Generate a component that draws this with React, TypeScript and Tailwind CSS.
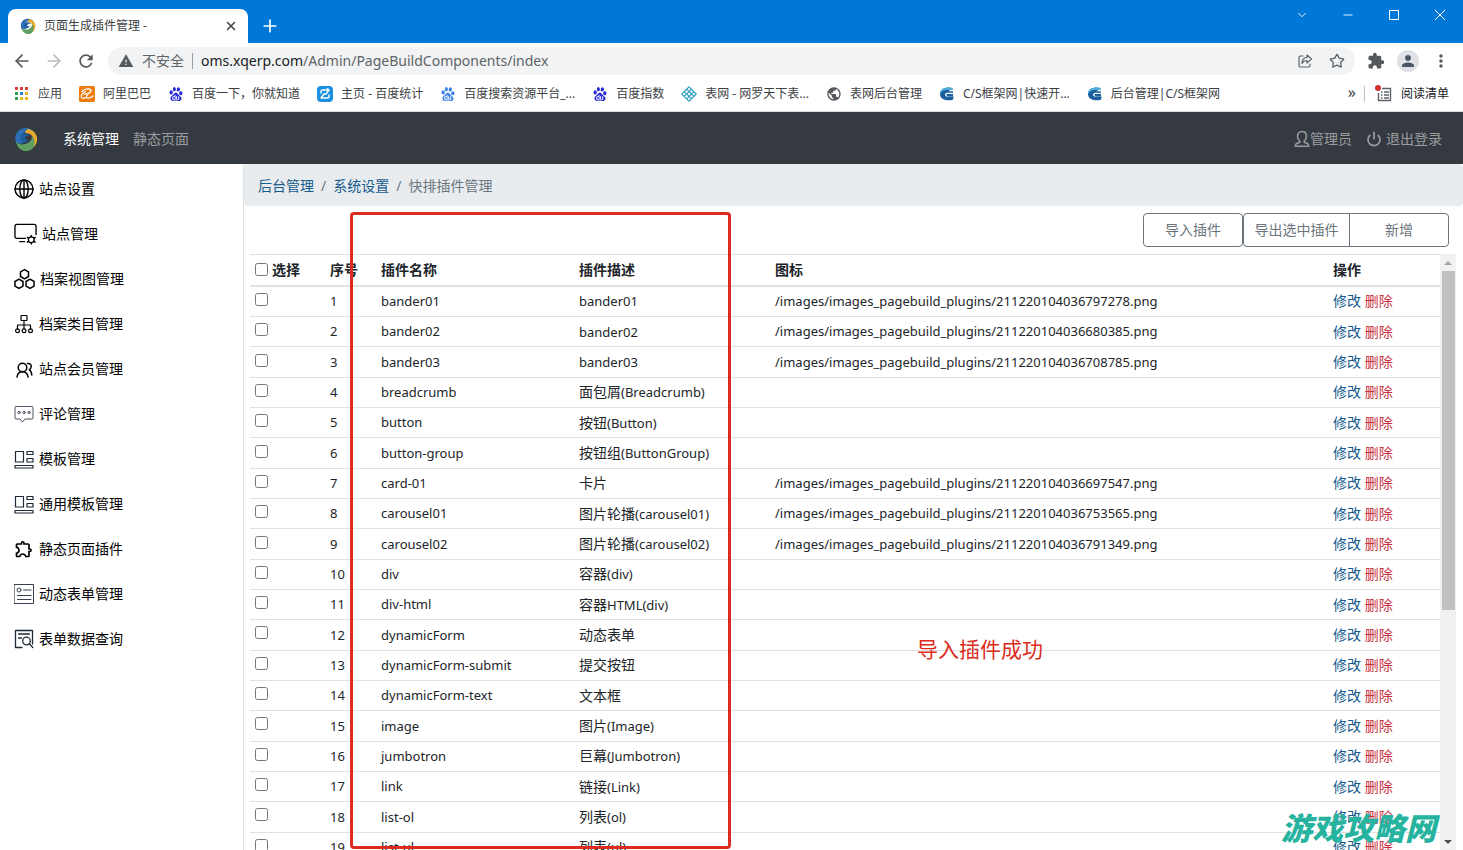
import React from 'react';
import { ChevronDown, Minus, Square, X, Plus, ArrowLeft, ArrowRight, Star, Power } from 'lucide-react';
import { MdExtension, MdOutlineExtension, MdPerson, MdMoreVert, MdRefresh, MdWarning, MdPublic } from 'react-icons/md';
import { SiBaidu } from 'react-icons/si';

interface IconProps {
  className?: string;
}

interface Plugin {
  name: string;
  label?: string;
  tag?: string;
  icon?: string;
}

const plugins: Plugin[] = [
  { name: 'bander01', tag: 'bander01', icon: '211220104036797278' },
  { name: 'bander02', tag: 'bander02', icon: '211220104036680385' },
  { name: 'bander03', tag: 'bander03', icon: '211220104036708785' },
  { name: 'breadcrumb', label: '面包屑', tag: '(Breadcrumb)' },
  { name: 'button', label: '按钮', tag: '(Button)' },
  { name: 'button-group', label: '按钮组', tag: '(ButtonGroup)' },
  { name: 'card-01', label: '卡片', icon: '211220104036697547' },
  { name: 'carousel01', label: '图片轮播', tag: '(carousel01)', icon: '211220104036753565' },
  { name: 'carousel02', label: '图片轮播', tag: '(carousel02)', icon: '211220104036791349' },
  { name: 'div', label: '容器', tag: '(div)' },
  { name: 'div-html', label: '容器', tag: 'HTML(div)' },
  { name: 'dynamicForm', label: '动态表单' },
  { name: 'dynamicForm-submit', label: '提交按钮' },
  { name: 'dynamicForm-text', label: '文本框' },
  { name: 'image', label: '图片', tag: '(Image)' },
  { name: 'jumbotron', label: '巨幕', tag: '(Jumbotron)' },
  { name: 'link', label: '链接', tag: '(Link)' },
  { name: 'list-ol', label: '列表', tag: '(ol)' },
  { name: 'list-ul', label: '列表', tag: '(ul)' },
];

const line = { fill: 'none', stroke: 'currentColor', strokeLinecap: 'round', strokeLinejoin: 'round' } as const;

const SwirlLogo: React.FC<IconProps> = ({ className }) => (
  <svg viewBox="0 0 24 24" className={className} fill="none">
    <path d="M2 16C-1 7 5 1 12 1c4 0 7 2 9 5-5-3-11-2-13 2-2 3 0 7 2 8-3 1-6 1-8 0z" fill="#2f6fb5" />
    <path d="M15 2c6 2 9 7 8 12-1 4-3 7-7 8 4-4 5-10 2-13-1-2-4-3-7-3 1-3 2-4 4-4z" fill="#e9a92b" />
    <path d="M2 15c3 3 8 3 12 1 3-2 4-4 4-7 4 4 3 11-1 14-6 3-13 0-15-8z" fill="#5f9f62" />
    <path d="M6 12c-1-5 7-8 11-3-3-1-6 0-6 2 0 2 2 2 4 1-2 5-9 4-9 0z" fill="#1f5f9f" />
  </svg>
);

const GlobeIcon = () => (
  <svg viewBox="0 0 20 20" className="w-5 h-5" {...line} strokeWidth="1.4">
    <circle cx="10" cy="10" r="9" />
    <ellipse cx="10" cy="10" rx="4.2" ry="9" />
    <path d="M1 10h18M10 1v18" />
  </svg>
);

const MonitorGearIcon = () => (
  <svg viewBox="0 0 24 22" className="w-[23px] h-[22px]" {...line} strokeWidth="1.4">
    <path d="M12 15.500H3a2 2 0 0 1-2-2V3a2 2 0 0 1 2-2h18a2 2 0 0 1 2 2v8.500M6 19h5" />
    <circle cx="18" cy="17" r="3" />
    <path d="M18 12.500v1.500M18 20v1.500M13.800 14.500l1.400.8M20.800 18.700l1.400.8M13.800 19.500l1.400-.8M20.800 15.300l1.400-.8" />
  </svg>
);

const HexagonsIcon = () => (
  <svg viewBox="0 0 22 22" className="w-[21px] h-[22px]" {...line} strokeWidth="1.6">
    <path d="M11 1.200l4.200 2.400v4.800L11 10.800 6.800 8.400V3.600z" />
    <path d="M5.200 11.200l4.200 2.400v4.800l-4.200 2.400L1 18.400v-4.800z" />
    <path d="M16.800 11.200l4.200 2.400v4.800l-4.200 2.400-4.200-2.400v-4.800z" />
  </svg>
);

const SitemapIcon = () => (
  <svg viewBox="0 0 20 20" className="w-5 h-5" {...line} strokeWidth="1.2">
    <rect x="7" y="1.500" width="6" height="5" rx=".5" />
    <path d="M10 6.500V15M3.500 15v-4h13v4" />
    <circle cx="3.500" cy="16.800" r="1.900" />
    <circle cx="10" cy="16.800" r="1.900" />
    <circle cx="16.500" cy="16.800" r="1.900" />
  </svg>
);

const MembersIcon = () => (
  <svg viewBox="0 0 20 20" className="w-5 h-5" {...line} strokeWidth="1.5">
    <circle cx="8.500" cy="8.500" r="4.300" />
    <path d="M3 18c.4-3 2.500-5.200 5.500-5.200s5.100 2.200 5.500 5.200M13.500 4.500c3-.3 4 1.700 3.700 3.500-.2 1.300-.9 2.200-2 2.700 1.600.9 2.400 2.700 2.600 5.300" />
  </svg>
);

const CommentIcon = () => (
  <svg viewBox="0 0 20 20" className="w-5 h-5" {...line} strokeWidth="1" stroke="#4b5563">
    <path d="M2 2.500h16a1 1 0 0 1 1 1V14a1 1 0 0 1-1 1h-7l-2.500 3L6 15H2a1 1 0 0 1-1-1V3.500a1 1 0 0 1 1-1z" />
    <circle cx="5" cy="8.500" r="1.200" />
    <circle cx="10" cy="8.500" r="1.200" />
    <circle cx="15" cy="8.500" r="1.200" />
  </svg>
);

const TemplateIcon = () => (
  <svg viewBox="0 0 20 20" className="w-5 h-5" {...line} strokeWidth="1.2" stroke="#1f2937">
    <rect x="1.500" y="2.500" width="8" height="10.500" />
    <rect x="13" y="2.500" width="6" height="3" />
    <rect x="13" y="9.500" width="6" height="3.500" />
    <rect x="1" y="16.500" width="18" height="2.500" />
  </svg>
);

const FormIcon = () => (
  <svg viewBox="0 0 20 20" className="w-5 h-5" {...line} strokeWidth="1" stroke="#374151">
    <rect x=".5" y=".5" width="19" height="19" />
    <circle cx="5" cy="6" r="2" />
    <path d="M9.500 6H17M3.500 11.500H17M3.500 15.500H17" />
  </svg>
);

const FormSearchIcon = () => (
  <svg viewBox="0 0 20 20" className="w-5 h-5" {...line} strokeWidth="1.3" stroke="#1f2937">
    <path d="M8 18.500H1.500v-17h17V15M4.500 5h11M4.500 9h3" />
    <circle cx="12.500" cy="12" r="3.800" />
    <path d="M15.300 14.800l3.500 3.700" />
  </svg>
);

const UserOutline = () => (
  <svg viewBox="0 0 16 18" className="w-4 h-[18px]" {...line} strokeWidth="1.600">
    <path d="M8 1.500c2.800 0 4.500 2 4.500 4.800 0 2-1 3.700-2.200 4.600v1.300l3 1.300c1 .4 1.400 1.300 1.400 2.700H1.300c0-1.400.4-2.300 1.400-2.700l3-1.300v-1.300C4.500 10 3.500 8.300 3.500 6.300c0-2.800 1.700-4.800 4.500-4.800z" />
  </svg>
);

const AppsIcon = () => (
  <svg viewBox="0 0 16 16" className="w-4 h-4">
    <path d="M1 1h3v3H1zM6 1h3v3H6zM11 1h3v3h-3z" fill="#d93f35" />
    <path d="M1 6h3v3H1z" fill="#2f9e4f" />
    <path d="M6 6h3v3H6z" fill="#2b7de9" />
    <path d="M11 6h3v3h-3z" fill="#e9b21f" />
    <path d="M1 11h3v3H1z" fill="#2f9e4f" />
    <path d="M6 11h3v3H6zM11 11h3v3h-3z" fill="#e9b21f" />
  </svg>
);

const AlibabaIcon = () => (
  <svg viewBox="0 0 16 16" className="w-4 h-4" fill="none">
    <rect width="16" height="16" rx="1.500" fill="#f07c10" />
    <path d="M3 5.500C5 3 9.500 2.500 11.500 3.500c2.500 1.500-3 4-4 6.500-.8 2.500 2.500 3 6.500 0" stroke="#fff" strokeWidth="1.300" strokeLinecap="round" />
    <path d="M6.500 5.500C3 7.500 1.500 10 2.500 11.500c.8 1.200 3 1 5-.3M5.500 8.300l2.500-1" stroke="#fff" strokeWidth="1.200" strokeLinecap="round" />
  </svg>
);

const TongjiIcon = () => (
  <svg viewBox="0 0 16 16" className="w-4 h-4" fill="none">
    <rect width="16" height="16" rx="4" fill="#1b8fe0" />
    <path d="M4 7V5.500A1.500 1.500 0 0 1 5.500 4H12M10.500 2.800L12 4l-3 4H7l-3 4h6.500A1.500 1.500 0 0 0 12 10.500V9" stroke="#fff" strokeWidth="1.400" strokeLinecap="round" strokeLinejoin="round" />
  </svg>
);

// four interlaced loops laid out on the diagonal
const KnotIcon = () => (
  <svg viewBox="0 0 16 16" className="w-4 h-4" fill="none" stroke="#2e9fc0" strokeWidth="1.200" strokeLinejoin="round">
    <path d="M8 .8l2.400 2.400L3.200 10.400.8 8zM10.400 3.200l2.400 2.400-7.200 7.200-2.400-2.400M12.800 5.600L15.200 8 8 15.200l-2.400-2.400" />
    <path d="M5.600 3.200l7.200 7.200M3.200 5.600l7.200 7.200" />
  </svg>
);

const CsIcon = () => (
  <svg viewBox="0 0 16 16" className="w-4 h-4">
    <path d="M14 2C8 .5 1 2 1 8c0 5.500 6 7 12.500 6 .8-1 1.200-2.500 1.200-3.500C10 11.500 6 11 6 8.500 6 7 8 6.500 14 7V5.500C9 4.500 5 5.500 5 8.500" fill="#1c5f9e" />
    <path d="M7.500 8H14v2.500l-5 .2C8 10.300 7.500 9.500 7.500 8z" fill="#1c5f9e" />
    <path d="M14 2C8 .5 1 2 1 8 3 4 7 3 13.500 4z" fill="#4fb0dd" />
  </svg>
);

const ShareIcon = () => (
  <svg viewBox="0 0 16 16" className="w-4 h-4" {...line} strokeWidth="1.200">
    <path d="M6 3H3.500A1.500 1.500 0 0 0 2 4.500v8A1.500 1.500 0 0 0 3.500 14h8a1.500 1.500 0 0 0 1.500-1.500V11" />
    <path d="M10 2l4.500 4L10 10V7.500C7.500 7.500 6 8.500 5 10.500 5 7 7 4.700 10 4.500z" />
  </svg>
);

const ReadingListIcon = () => (
  <svg viewBox="0 0 18 18" className="w-[18px] h-[18px]" fill="none">
    <path d="M7 3.500h8.500v12h-12V8" stroke="#5f6368" strokeWidth="1.400" />
    <path d="M6 7h1.500M9 7h5M6 10h1.500M9 10h5M6 13h1.500M9 13h5" stroke="#5f6368" strokeWidth="1.300" />
    <circle cx="3" cy="3" r="3" fill="#d32f2f" />
  </svg>
);

const bookmarks: { label: string; icon: React.ReactNode }[] = [
  { label: '应用', icon: <AppsIcon /> },
  { label: '阿里巴巴', icon: <AlibabaIcon /> },
  { label: '百度一下，你就知道', icon: <SiBaidu className="w-4 h-[14px] text-[#2a2ad8]" /> },
  { label: '主页 - 百度统计', icon: <TongjiIcon /> },
  { label: '百度搜索资源平台_...', icon: <SiBaidu className="w-4 h-[14px] text-[#3a82e8]" /> },
  { label: '百度指数', icon: <SiBaidu className="w-4 h-[14px] text-[#2a2ad8]" /> },
  { label: '表网 - 网罗天下表...', icon: <KnotIcon /> },
  { label: '表网后台管理', icon: <MdPublic className="w-4 h-4 text-[#55585c]" /> },
  { label: 'C/S框架网|快速开...', icon: <CsIcon /> },
  { label: '后台管理|C/S框架网', icon: <CsIcon /> },
];

const menu: { label: string; icon: React.ReactNode }[] = [
  { label: '站点设置', icon: <GlobeIcon /> },
  { label: '站点管理', icon: <MonitorGearIcon /> },
  { label: '档案视图管理', icon: <HexagonsIcon /> },
  { label: '档案类目管理', icon: <SitemapIcon /> },
  { label: '站点会员管理', icon: <MembersIcon /> },
  { label: '评论管理', icon: <CommentIcon /> },
  { label: '模板管理', icon: <TemplateIcon /> },
  { label: '通用模板管理', icon: <TemplateIcon /> },
  { label: '静态页面插件', icon: <MdOutlineExtension className="w-5 h-5" /> },
  { label: '动态表单管理', icon: <FormIcon /> },
  { label: '表单数据查询', icon: <FormSearchIcon /> },
];

const BrowserChrome = () => (
  <div className="shrink-0 bg-white text-[#3c4043]">
    <div className="h-[43px] bg-[#0078d7] flex items-end justify-between">
      <div className="flex items-end">
        <div className="ml-2 w-60 h-[34px] rounded-t-lg bg-white flex items-center pl-3 pr-2.5">
          <SwirlLogo className="w-4 h-4" />
          <span className="ml-2 flex-1 text-xs">页面生成插件管理 -</span>
          <button aria-label="关闭标签页"><X className="w-3.5 h-3.5" strokeWidth={2.5} /></button>
        </div>
        <button aria-label="新标签页" className="ml-3 h-[34px] text-white"><Plus className="w-5 h-5" /></button>
      </div>
      <div className="self-start h-[30px] flex items-center gap-8 pr-4 text-white">
        <button aria-label="搜索标签页"><ChevronDown className="w-3.5 h-3.5" strokeWidth={1.5} /></button>
        <button aria-label="最小化"><Minus className="w-3.5 h-3.5" strokeWidth={1.5} /></button>
        <button aria-label="最大化">
          <svg viewBox="0 0 14 14" className="w-3.5 h-3.5" fill="none" stroke="currentColor"><path d="M2.500 2.500h9v9h-9z" /></svg>
        </button>
        <button aria-label="关闭">
          <svg viewBox="0 0 14 14" className="w-3.5 h-3.5" fill="none" stroke="currentColor"><path d="M2 2l10 10M12 2L2 12" /></svg>
        </button>
      </div>
    </div>

    <div className="h-[37px] flex items-center pl-3 pr-3 pb-px">
      <button aria-label="后退"><ArrowLeft className="w-5 h-5 text-[#55585c]" /></button>
      <button aria-label="前进" className="ml-3"><ArrowRight className="w-5 h-5 text-[#b9bcc0]" /></button>
      <button aria-label="刷新" className="ml-3"><MdRefresh className="w-5 h-5 text-[#55585c]" /></button>
      <div className="ml-3 flex-1 h-7 rounded-full bg-[#f1f3f4] flex items-center px-2.5">
        <MdWarning className="w-4 h-4 text-[#55585c]" />
        <span className="ml-2 text-sm text-[#5f6368]">不安全</span>
        <span className="mx-2 w-px h-4 bg-[#9aa0a6]" />
        <span className="flex-1 text-sm text-[#5f6368]">
          <span className="text-[#202124]">oms.xqerp.com</span>/Admin/PageBuildComponents/index
        </span>
        <button aria-label="分享" className="text-[#5f6368]"><ShareIcon /></button>
        <button aria-label="收藏" className="ml-4 text-[#5f6368]"><Star className="w-4 h-4" /></button>
      </div>
      <button aria-label="扩展程序" className="ml-3"><MdExtension className="w-[18px] h-[18px] text-[#55585c]" /></button>
      <button aria-label="用户" className="ml-3 w-[22px] h-[22px] rounded-full bg-[#dee1e6] flex items-center justify-center">
        <MdPerson className="w-[18px] h-[18px] text-[#4a5568]" />
      </button>
      <button aria-label="更多" className="ml-3"><MdMoreVert className="w-5 h-5 text-[#55585c]" /></button>
    </div>

    <div className="h-8 flex items-center justify-between pl-3.5 pr-3.5 pb-1 text-xs border-b border-[#dadce0]">
      <div className="flex items-center gap-[17px]">
        {bookmarks.map(b => (
          <a key={b.label} href="#" className="flex items-center gap-2 whitespace-nowrap">
            {b.icon}
            {b.label}
          </a>
        ))}
      </div>
      <div className="flex items-center">
        <span className="pb-1 text-base leading-4">»</span>
        <span className="ml-2 mr-2.5 w-px h-4 bg-[#bdc1c6]" />
        <button className="flex items-center gap-2 text-[#202124]">
          <ReadingListIcon />
          阅读清单
        </button>
      </div>
    </div>
  </div>
);

const PluginTable = () => (
  <table className="flex-1 h-[609px] table-fixed border-collapse text-left text-[#212529]">
    <thead>
      <tr className="h-[31px] border-t border-b-2 border-[#dee2e6]">
        <th className="w-[75px] px-[5px]">
          <label className="flex items-center gap-1">
            <input type="checkbox" className="w-[13px] h-[13px]" />
            选择
          </label>
        </th>
        <th className="w-[51px] px-[5px] whitespace-nowrap">序号</th>
        <th className="w-[198px] px-[5px]">插件名称</th>
        <th className="w-[196px] px-[5px]">插件描述</th>
        <th className="px-[5px]">图标</th>
        <th className="w-28 px-[5px]">操作</th>
      </tr>
    </thead>
    <tbody>
      {plugins.map((p, i) => (
        <tr key={p.name} className="border-b border-[#dee2e6]">
          <td className="px-[5px]">
            <input type="checkbox" aria-label={p.name} className="block w-[13px] h-[13px] mb-1" />
          </td>
          <td className="px-[5px] text-[13px]">{i + 1}</td>
          <td className="px-[5px] text-[13px]">{p.name}</td>
          <td className="px-[5px]">
            {p.label}
            {p.tag && <span className="text-[13px]">{p.tag}</span>}
          </td>
          <td className="px-[5px] text-[13px]">{p.icon && `/images/images_pagebuild_plugins/${p.icon}.png`}</td>
          <td className="px-[5px] whitespace-nowrap">
            <a href="#" className="text-[#155a8c]">修改</a>{' '}
            <a href="#" className="text-[#c8323f]">删除</a>
          </td>
        </tr>
      ))}
    </tbody>
  </table>
);

const ScrollBar = () => (
  <div className="w-4 flex flex-col items-center justify-between bg-[#f1f1f1]">
    <div className="flex flex-col items-center">
      <svg viewBox="0 0 16 17" className="w-4 h-[17px]"><path d="M4 11l4-4 4 4z" fill="#a3a3a3" /></svg>
      <div className="w-[13px] h-[339px] bg-[#c1c1c1]" />
    </div>
    <svg viewBox="0 0 16 17" className="w-4 h-[17px]"><path d="M4 7l4 4 4-4z" fill="#505050" /></svg>
  </div>
);

export default function App() {
  return (
    <div className="h-screen flex flex-col overflow-hidden bg-white text-sm font-['Noto_Sans','Noto_Sans_CJK_SC',sans-serif]">
      <BrowserChrome />

      <nav className="shrink-0 h-[52px] bg-[#343a40] flex items-center justify-between pt-0.5 pl-3.5 pr-[21px] text-[#9a9da0]">
        <div className="flex items-center">
          <SwirlLogo className="w-6 h-6" />
          <a href="#" className="ml-[25px] text-white">系统管理</a>
          <a href="#" className="ml-3.5">静态页面</a>
        </div>
        <div className="flex items-center gap-3.5">
          <a href="#" className="flex items-center"><UserOutline />管理员</a>
          <a href="#" className="flex items-center gap-1"><Power className="w-4 h-4" strokeWidth={2.5} />退出登录</a>
        </div>
      </nav>

      <div className="flex-1 min-h-0 flex">
        <aside className="w-[244px] shrink-0 border-r border-[#dee2e6] pt-0.5">
          {menu.map(m => (
            <a key={m.label} href="#" className="h-[45px] flex items-center gap-[5px] pl-3.5 text-black">
              {m.icon}
              {m.label}
            </a>
          ))}
        </aside>

        <main className="flex-1 min-w-0 flex flex-col">
          <div className="shrink-0 h-[42px] rounded bg-[#e9ecef] flex items-center gap-[7px] px-3.5 pt-0.5 text-[#6c757d]">
            <a href="#" className="text-[#155a8c]">后台管理</a>
            <span>/</span>
            <a href="#" className="text-[#155a8c]">系统设置</a>
            <span>/</span>
            <span>快排插件管理</span>
          </div>

          <div className="relative flex-1 min-h-0 flex flex-col">
            <div className="shrink-0 h-12 flex items-center justify-end pr-3.5 text-[#6c757d]">
              <button className="w-[100px] h-[34px] border border-[#6c757d] rounded">导入插件</button>
              <button className="w-[107px] h-[34px] border border-[#6c757d] rounded-l">导出选中插件</button>
              <button className="-ml-px w-[100px] h-[34px] border border-[#6c757d] rounded-r">新增</button>
            </div>

            <div className="flex-1 min-h-0 flex pl-1.5 pr-[7px]">
              <div className="flex-1 min-w-0 flex items-start overflow-hidden">
                <PluginTable />
              </div>
              <ScrollBar />
            </div>

            <div className="absolute left-[106px] top-1.5 bottom-px w-[381px] border-3 border-[#dc2b20] rounded-sm pointer-events-none" />
            <p className="absolute left-[673px] top-[427px] text-[21px] leading-8 text-[#dc2b20]">导入插件成功</p>
            <p className="absolute right-[27px] bottom-1 text-[31px] leading-9 font-black italic text-[#26b3a0]">游戏攻略网</p>
          </div>
        </main>
      </div>
    </div>
  );
}
